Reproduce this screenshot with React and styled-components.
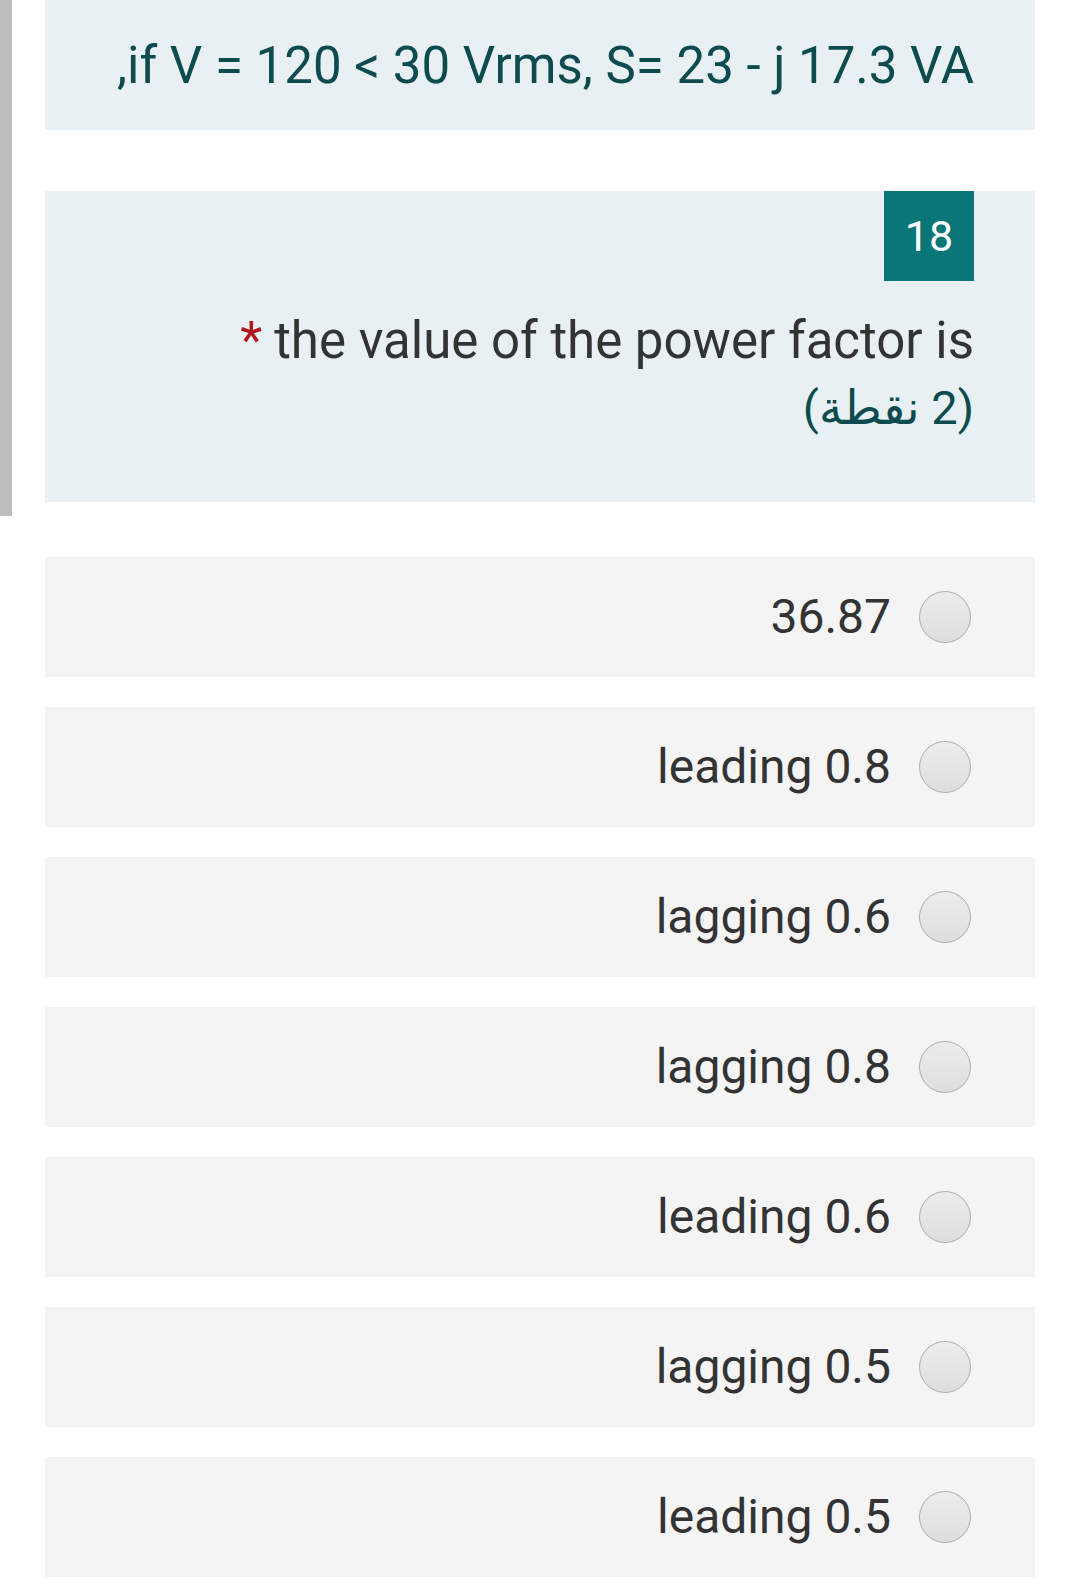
import React from "react";
import styled, { createGlobalStyle } from "styled-components";

const GlobalStyle = createGlobalStyle`
  body {
    margin: 0;
    background: #ffffff;
    font-family: Roboto, "DejaVu Sans", sans-serif;
  }
`;

const Page = styled.div`
  width: 1080px;
  padding-bottom: 19px;
`;

const TopSection = styled.div`
  border-left: 12px solid #bdbdbd;
  padding: 0 45px 14px 33px;
  display: flex;
  flex-direction: column;
  gap: 61px;
`;

const HeaderCard = styled.div`
  height: 130px;
  background: #e8f0f3;
  display: flex;
  align-items: center;
  justify-content: flex-end;
  padding-right: 61px;
  box-sizing: border-box;
`;

const HeaderText = styled.div`
  font-size: 51px;
  line-height: 1;
  color: #0d4b4e;
  margin-top: 0;
`;

const QuestionCard = styled.div`
  height: 311px;
  background: #e8f0f3;
  display: flex;
  flex-direction: column;
  align-items: flex-end;
  padding-right: 61px;
  box-sizing: border-box;
`;

const Badge = styled.div`
  width: 90px;
  height: 90px;
  background: #0b7677;
  color: #ffffff;
  font-size: 43px;
  display: flex;
  align-items: center;
  justify-content: center;
`;

const QuestionTitle = styled.div`
  margin-top: 29px;
  font-size: 51px;
  line-height: 62px;
  color: #333333;
  text-align: right;
`;

const Star = styled.span`
  color: #b0191c;
  margin-right: 12px;
`;

const Points = styled.div`
  font-size: 47px;
  line-height: 72px;
  color: #0d4b4e;
`;

const Options = styled.div`
  margin-top: 41px;
  padding: 0 45px;
  display: flex;
  flex-direction: column;
  gap: 30px;
`;

const OptionRow = styled.div`
  height: 120px;
  background: #f4f4f4;
  display: flex;
  align-items: center;
  justify-content: flex-end;
  gap: 28px;
  padding-right: 64px;
  box-sizing: border-box;
`;

const OptionLabel = styled.span`
  font-size: 48px;
  color: #333333;
  line-height: 1;
`;

const Radio = styled.span`
  width: 50px;
  height: 50px;
  border-radius: 50%;
  border: 1px solid #adadad;
  background: linear-gradient(#ececec, #dedede);
  flex-shrink: 0;
`;

const options = [
  "36.87",
  "leading 0.8",
  "lagging 0.6",
  "lagging 0.8",
  "leading 0.6",
  "lagging 0.5",
  "leading 0.5",
];

export default function App() {
  return (
    <Page>
      <GlobalStyle />
      <TopSection>
        <HeaderCard>
          <HeaderText>,if V = 120 &lt; 30 Vrms, S= 23 - j 17.3 VA</HeaderText>
        </HeaderCard>
        <QuestionCard>
          <Badge>18</Badge>
          <QuestionTitle>
            <Star>*</Star>the value of the power factor is
          </QuestionTitle>
          <Points dir="rtl">(2 نقطة)</Points>
        </QuestionCard>
      </TopSection>
      <Options>
        {options.map((o) => (
          <OptionRow key={o}>
            <OptionLabel>{o}</OptionLabel>
            <Radio />
          </OptionRow>
        ))}
      </Options>
    </Page>
  );
}
